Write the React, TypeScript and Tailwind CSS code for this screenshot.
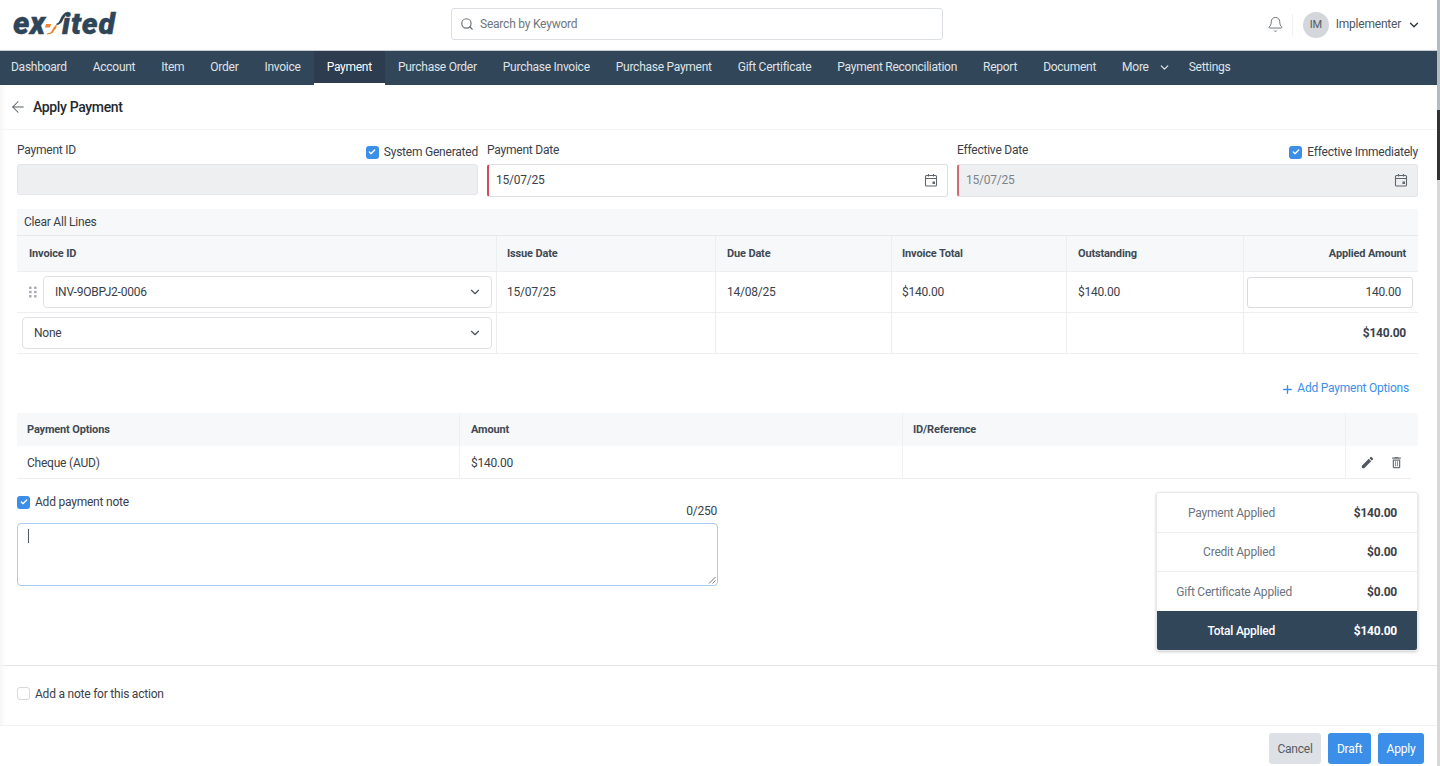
import { ArrowLeft, Bell, Check, ChevronDown, Plus, Search } from "lucide-react";

const nav = ["Dashboard","Account","Item","Order","Invoice","Payment","Purchase Order","Purchase Invoice","Purchase Payment","Gift Certificate","Payment Reconciliation","Report","Document"];

function Box({ on }: { on?: boolean }) {
  return on ? (
    <span className="flex h-[13px] w-[13px] items-center justify-center rounded-[3px] bg-[#3b8fe8] text-white">
      <Check size={8} strokeWidth={4} />
    </span>
  ) : (
    <span className="h-[13px] w-[13px] rounded-[3px] border border-[#d5d8dd] bg-white" />
  );
}

function Cal() {
  return (
    <svg width="14" height="14" viewBox="0 0 14 14" fill="none" stroke="#5f666d" strokeWidth="1.1">
      <rect x="1.5" y="2.5" width="11" height="10.5" rx="1" />
      <path d="M1.5 5.5h11M4.5 1v2.5M9.5 1v2.5" />
      <rect x="8.5" y="8.5" width="2.5" height="2.5" fill="#5f666d" stroke="none" />
    </svg>
  );
}

function Logo() {
  return (
    <svg width="106" height="28" viewBox="0 0 106 28" className="overflow-visible">
      <text x="0" y="24" fontFamily="Roboto, sans-serif" fontWeight="900" fontStyle="italic" fontSize="31" letterSpacing="0.4" stroke="#2f4558" strokeWidth="0.4" fill="#2f4558">ex</text>
      <text x="49" y="24" fontFamily="Roboto, sans-serif" fontWeight="900" fontStyle="italic" fontSize="30" letterSpacing="0.9" stroke="#2f4558" strokeWidth="0.4" fill="#2f4558">ited</text>
      <path d="M33 14h5l-1 3.500h-5z" fill="#f0862b" />
      <path d="M34 23.500c3.500-.3 4.500-2 5.500-4 1-2 2-4 4.500-5l-1 4c-1 .5-1.500 1.500-2.500 3.300-1 1.800-3 2.700-7 2.700z" fill="#f0862b" />
      <path d="M43 14c3-1 3.500-3 5-6.500 1-2 3-4.500 5.500-5.500l-1.300 4.500c-1.200 1-1.700 2.500-2.700 4.500-1 2-3 3.500-5.500 4z" fill="#2f4558" />
    </svg>
  );
}

const th = "flex items-center pt-[1px] text-[11px] tracking-[-0.15px] font-bold text-[#3f4a54] border-r border-[#eceef0]";
const cols = "grid-cols-[480px_219px_176px_175px_177px_174px]";

export default function App() {
  return (
    <div className="relative flex h-[766px] w-[1440px] flex-col overflow-hidden bg-white font-['Roboto',sans-serif] text-[12px] tracking-[-0.22px] text-[#3a4149]">
      <header className="flex h-[51px] shrink-0 items-center border-b border-[#c9cdd1] pb-[2px] pr-[19px]">
        <div className="ml-[13px] w-[438px]"><Logo /></div>
        <div className="flex h-[32px] w-[492px] items-center rounded-[3px] border border-[#dcdfe3] pl-[8px] text-[#6f767d]">
          <Search size={14} className="text-[#6a7077]" />
          <span className="ml-[6px]">Search by Keyword</span>
        </div>
        <div className="ml-auto mt-[2px] flex items-center">
          <Bell size={17} strokeWidth={1.2} className="-mt-[2px] text-[#555c63]" />
          <span className="ml-[8px] h-[22px] w-px bg-[#f0f1f2]" />
          <span className="ml-[10px] flex h-[26px] w-[26px] items-center justify-center rounded-full bg-[#d3d6da] text-[11px] text-[#555c63]">IM</span>
          <span className="ml-[7px] -mt-[2px] text-[#50575e]">Implementer</span>
          <ChevronDown size={14} strokeWidth={2.4} className="ml-[6px] text-[#30383f]" />
        </div>
      </header>

      <nav className="flex h-[34px] shrink-0 items-stretch bg-[#32465a] pr-[3px] tracking-[-0.26px] text-[#dfe3e7]">
        {nav.map((n) => (
          <span key={n} className={n === "Payment" ? "flex items-center border-b-2 border-white bg-[#2d3c4e] px-[13px] text-white" : n === "Dashboard" ? "flex items-center border-b-2 border-transparent pl-[11px] pr-[13px]" : "flex items-center border-b-2 border-transparent px-[13px]"}>{n}</span>
        ))}
        <span className="flex items-center border-b-2 border-transparent px-[13px]">More<ChevronDown size={13} strokeWidth={2.4} className="ml-[9px]" /></span>
        <span className="flex items-center border-b-2 border-transparent px-[5px]">Settings</span>
      </nav>

      <div className="flex h-[45px] shrink-0 items-center border-b border-[#f3f4f5] pl-[9px]">
        <ArrowLeft size={18} strokeWidth={1.4} className="text-[#555c63]" />
        <span className="ml-[6px] text-[14px] font-medium tracking-[-0.35px] text-[#25292e]">Apply Payment</span>
      </div>

      <div className="flex min-h-0 flex-1 flex-col pl-[17px] pr-[22px]">
        <div className="grid grid-cols-[461px_461px_461px] gap-x-[9px] pt-[11px]">
          <div>
            <div className="flex h-[23px] items-start justify-between">
              <span>Payment ID</span>
              <span className="flex items-center gap-[5px] pt-[2px]"><Box on />System Generated</span>
            </div>
            <div className="h-[31px] rounded-[3px] border border-[#e3e5e8] bg-[#eeeff1]" />
          </div>
          <div>
            <div className="h-[23px]">Payment Date</div>
            <div className="flex h-[33px] items-center justify-between rounded-[3px] border border-l-2 border-[#dcdfe3] border-l-[#cf4a5a] pb-[1px] pl-[7px] pr-[9px]">15/07/25<Cal /></div>
          </div>
          <div>
            <div className="flex h-[23px] items-start justify-between">
              <span>Effective Date</span>
              <span className="flex items-center gap-[5px] pt-[2px]"><Box on />Effective Immediately</span>
            </div>
            <div className="flex h-[33px] items-center justify-between rounded-[3px] border border-l-2 border-[#e3e5e8] border-l-[#cf6a76] bg-[#eeeff1] pb-[1px] pl-[7px] pr-[9px] text-[#7d838a]">15/07/25<Cal /></div>
          </div>
        </div>

        <div className="mt-[12px] flex h-[27px] shrink-0 items-center border-b border-[#e6e8ea] bg-[#f7f8fa] pl-[7px]">Clear All Lines</div>
        <div className={`grid h-[36px] ${cols} border-b border-[#eceef0] bg-[#f7f8fa]`}>
          <div className={`${th} pl-[12px]`}>Invoice ID</div>
          <div className={`${th} pl-[10px]`}>Issue Date</div>
          <div className={`${th} pl-[11px]`}>Due Date</div>
          <div className={`${th} pl-[10px]`}>Invoice Total</div>
          <div className={`${th} pl-[11px]`}>Outstanding</div>
          <div className={`${th} justify-end border-r-0 pr-[12px]`}>Applied Amount</div>
        </div>
        <div className={`grid h-[41px] ${cols} border-b border-[#eceef0]`}>
          <div className="flex items-center border-r border-[#eceef0] pl-[12px] pr-[4px]">
            <svg width="8" height="12" viewBox="0 0 8 12" fill="#a9aeb4" className="shrink-0"><rect x="0" y="0.500" width="2.600" height="2.600" rx="0.600" /><rect x="5" y="0.500" width="2.600" height="2.600" rx="0.600" /><rect x="0" y="4.700" width="2.600" height="2.600" rx="0.600" /><rect x="5" y="4.700" width="2.600" height="2.600" rx="0.600" /><rect x="0" y="8.900" width="2.600" height="2.600" rx="0.600" /><rect x="5" y="8.900" width="2.600" height="2.600" rx="0.600" /></svg>
            <div className="ml-[6px] flex h-[32px] flex-1 items-center justify-between rounded-[4px] border border-[#dfe1e4] pb-[1px] pl-[11px] pr-[9px]">INV-9OBPJ2-0006<ChevronDown size={14} strokeWidth={2} className="text-[#4a5158]" /></div>
          </div>
          <div className="flex items-center border-r border-[#eceef0] pl-[10px]">15/07/25</div>
          <div className="flex items-center border-r border-[#eceef0] pl-[11px]">14/08/25</div>
          <div className="flex items-center border-r border-[#eceef0] pl-[10px]">$140.00</div>
          <div className="flex items-center border-r border-[#eceef0] pl-[11px]">$140.00</div>
          <div className="flex items-center pl-[3px] pr-[5px]"><div className="flex h-[31px] w-full items-center justify-end rounded-[3px] border border-[#d8dbdf] pr-[11px]">140.00</div></div>
        </div>
        <div className={`grid h-[41px] ${cols} border-b border-[#eceef0]`}>
          <div className="flex items-center border-r border-[#eceef0] pl-[5px] pr-[4px]">
            <div className="flex h-[32px] flex-1 items-center justify-between rounded-[4px] border border-[#dfe1e4] pb-[1px] pl-[11px] pr-[9px]">None<ChevronDown size={14} strokeWidth={2} className="text-[#4a5158]" /></div>
          </div>
          <div className="border-r border-[#eceef0]" />
          <div className="border-r border-[#eceef0]" />
          <div className="border-r border-[#eceef0]" />
          <div className="border-r border-[#eceef0]" />
          <div className="flex items-center justify-end pr-[12px] font-bold">$140.00</div>
        </div>

        <div className="flex h-[59px] shrink-0 items-end justify-end pb-[16px] pr-[9px] text-[#3b8fe8]">
          <Plus size={13} strokeWidth={2.4} className="mb-[1px]" /><span className="ml-[3px]">Add Payment Options</span>
        </div>

        <div className="grid h-[33px] grid-cols-[443px_443px_443px_72px] bg-[#f7f8fa]">
          <div className={`${th} pl-[10px]`}>Payment Options</div>
          <div className={`${th} pl-[11px]`}>Amount</div>
          <div className={`${th} pl-[10px]`}>ID/Reference</div>
          <div />
        </div>
        <div className="grid h-[33px] w-[1394px] grid-cols-[443px_443px_443px_65px] border-b border-[#eceef0]">
          <div className="flex items-center border-r border-[#f0f1f3] pl-[10px] pt-[1px]">Cheque (AUD)</div>
          <div className="flex items-center border-r border-[#f0f1f3] pl-[11px] pt-[1px]">$140.00</div>
          <div className="border-r border-[#f0f1f3]" />
          <div className="flex items-center pl-[14px]">
            <svg width="15" height="15" viewBox="0 0 24 24" fill="#50575e"><path d="M3 17.250V21h3.750L17.810 9.940l-3.750-3.750L3 17.250zM20.710 7.040a1 1 0 000-1.410l-2.340-2.340a1 1 0 00-1.410 0l-1.830 1.830 3.750 3.750 1.830-1.830z" /></svg>
            <svg width="15" height="15" viewBox="0 0 24 24" fill="#6b7278" className="ml-[14px]"><path d="M6 19c0 1.100.9 2 2 2h8c1.100 0 2-.9 2-2V7H6v12zM8 9h8v10H8V9zm7.500-5l-1-1h-5l-1 1H5v2h14V4z" /><path d="M10 10h1.300v8H10zM12.700 10H14v8h-1.300z" /></svg>
          </div>
        </div>

        <div className="flex flex-1 items-start justify-between">
          <div className="w-[701px] pt-[14px]">
            <div className="flex items-center gap-[5px]"><Box on />Add payment note</div>
            <div className="-mt-[9px] h-[15px] pr-[1px] text-right">0/250</div>
            <div className="relative mt-[6px] h-[63px] rounded-[4px] border border-[#a6ccf2]">
              <span className="absolute left-[10px] top-[5px] h-[14px] w-px bg-[#555c63]" />
              <svg width="8" height="8" viewBox="0 0 8 8" className="absolute bottom-[1px] right-[1px]" stroke="#666" strokeWidth="0.9"><path d="M1 7.500L7.500 1M4.500 7.500L7.500 4.500" /></svg>
            </div>
          </div>
          <div className="mt-[13px] w-[262px] overflow-hidden rounded-[3px] border border-[#e6e8ea] shadow-[0_1px_3px_rgba(0,0,0,0.2)]">
            <div className="flex h-[40px] items-center justify-end border-b border-[#eceef0] pr-[20px] text-[#6c747c]"><span>Payment Applied</span><b className="ml-[72px] w-[50px] text-right text-[#3a4149]">$140.00</b></div>
            <div className="flex h-[39px] items-center justify-end border-b border-[#eceef0] pr-[20px] text-[#6c747c]"><span>Credit Applied</span><b className="ml-[72px] w-[50px] text-right text-[#3a4149]">$0.00</b></div>
            <div className="flex h-[39px] items-center justify-end pr-[20px] text-[#6c747c]"><span className="mr-[55px]">Gift Certificate Applied</span><b className="w-[50px] text-right text-[#3a4149]">$0.00</b></div>
            <div className="flex h-[39px] items-center justify-end bg-[#32465a] pr-[20px] text-white"><span className="font-medium">Total Applied</span><b className="ml-[72px] w-[50px] text-right">$140.00</b></div>
          </div>
        </div>
      </div>

      <div className="flex h-[60px] shrink-0 items-center gap-[5px] border-t border-[#e3e5e8] pb-[4px] pl-[17px]"><Box />Add a note for this action</div>

      <footer className="flex h-[41px] shrink-0 items-end justify-end gap-[7px] border-t border-[#f1f2f3] pb-[2px] pr-[16px]">
        <span className="flex h-[31px] w-[52px] items-center justify-center rounded-[3px] bg-[#dde0e4] text-[#555c63]">Cancel</span>
        <span className="flex h-[31px] w-[43px] items-center justify-center rounded-[3px] bg-[#3b8fe8] text-white">Draft</span>
        <span className="flex h-[31px] w-[46px] items-center justify-center rounded-[3px] bg-[#3b8fe8] text-white">Apply</span>
      </footer>

      <div className="absolute left-0 top-[85px] h-[640px] w-[6px] bg-gradient-to-r from-[#f6f6f6] to-transparent" />
      <div className="absolute right-0 top-0 h-full w-[3px] bg-[#d8d8d8]">
        <div className="h-[110px] w-full bg-[#b4bcc3]" />
        <div className="h-[70px] w-full bg-[#333]" />
      </div>
    </div>
  );
}
